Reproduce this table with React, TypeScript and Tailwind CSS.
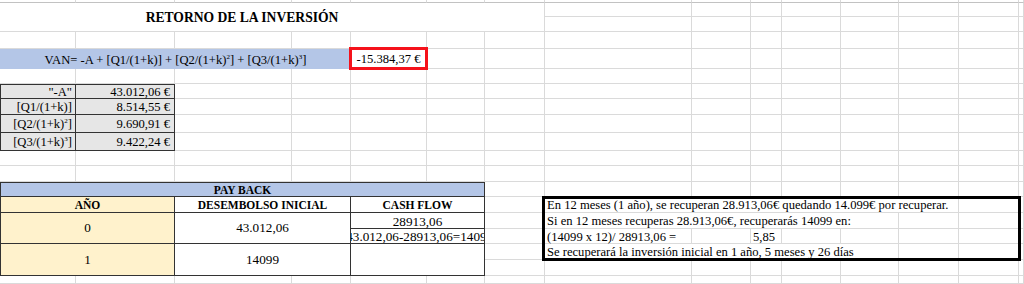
const sheetGrid =
  'grid grid-cols-[76px_99px_117px_59px_76px_58px_60px_147px_59px_31px_59px_58px_60px_60px_1fr] grid-rows-[3px_14px_15px_17px_20px_15px_15px_16px_18px_18px_15px_16px_15px_16px_16px_15px_16px_16px_1fr]';

const factors = [
  { label: <>&quot;-A&quot;</>, value: '43.012,06 €', first: true },
  { label: <>[Q1/(1+k)]</>, value: '8.514,55 €' },
  {
    label: (
      <>
        [Q2/(1+k)<sup className="text-[7px]">2</sup>]
      </>
    ),
    value: '9.690,91 €',
  },
  {
    label: (
      <>
        [Q3/(1+k)<sup className="text-[7px]">3</sup>]
      </>
    ),
    value: '9.422,24 €',
  },
];

const factorRows = [
  'row-start-7 row-end-8',
  'row-start-8 row-end-9',
  'row-start-9 row-end-10',
  'row-start-10 row-end-11',
];

export default function App() {
  return (
    <div className="grid h-[284px] w-[1024px] overflow-hidden bg-white font-['Liberation_Serif',serif] text-[12.6px] leading-none text-black">
      {/* cuadrícula de fondo */}
      <div className={`col-start-1 row-start-1 ${sheetGrid}`}>
        {Array.from({ length: 19 * 15 }, (_, i) => (
          <div
            key={i}
            className={
              i < 15
                ? 'border-r border-b border-r-[#dadada] border-b-[#c2c2c2]'
                : 'border-r border-b border-[#dadada]'
            }
          />
        ))}
      </div>

      {/* contenido */}
      <div className={`col-start-1 row-start-1 ${sheetGrid}`}>
        {/* título */}
        <div className="col-start-1 col-end-8 row-start-2 row-end-4 flex items-center justify-center border-r border-b border-[#dadada] bg-white pr-[60px] pt-[2px] text-[13.6px] font-bold">
          RETORNO DE LA INVERSIÓN
        </div>

        {/* VAN */}
        <div className="col-start-1 col-end-5 row-start-5 row-end-6 flex items-center justify-center bg-[#b4c6e7] pt-[3px]">
          VAN= -A + [Q1/(1+k)] + [Q2/(1+k)<sup className="text-[7px]">2</sup>] + [Q3/(1+k)
          <sup className="text-[7px]">3</sup>]
        </div>
        <div className="z-10 col-start-5 col-end-6 row-start-5 row-end-6 -mt-[2px] -mr-px -mb-px -ml-[2px] flex items-center justify-center border-[3px] border-[#f5121b] bg-white pt-[2px]">
          -15.384,37 €
        </div>

        {/* factores */}
        {factors.map((f, i) => (
          <div key={i} className="contents">
            <div
              className={`col-start-1 col-end-2 ${factorRows[i]} flex items-center justify-end border-r border-b border-l border-[#333] bg-[#e6e6e6] pr-[3px] pt-[2px] ${f.first ? 'border-t' : ''}`}
            >
              {f.label}
            </div>
            <div
              className={`col-start-2 col-end-3 ${factorRows[i]} flex items-center justify-end border-r border-b border-[#333] bg-[#e6e6e6] pr-[4px] pt-[2px] ${f.first ? 'border-t' : ''}`}
            >
              {f.value}
            </div>
          </div>
        ))}

        {/* pay back */}
        <div className="col-start-1 col-end-7 row-start-13 row-end-14 flex items-center justify-center border border-[#333] bg-[#b4c6e7] pt-[2px] text-[11.5px] font-bold">
          PAY BACK
        </div>
        <div className="col-start-1 col-end-3 row-start-14 row-end-15 flex items-center justify-center border-r border-b border-l border-[#333] bg-[#fff2cc] pt-[2px] text-[11.5px] font-bold">
          AÑO
        </div>
        <div className="col-start-3 col-end-5 row-start-14 row-end-15 flex items-center justify-center border-r border-b border-[#333] bg-white pt-[2px] text-[11.5px] font-bold">
          DESEMBOLSO INICIAL
        </div>
        <div className="col-start-5 col-end-7 row-start-14 row-end-15 flex items-center justify-center border-r border-b border-[#333] bg-white pt-[2px] text-[11.5px] font-bold">
          CASH FLOW
        </div>
        <div className="col-start-1 col-end-3 row-start-15 row-end-17 flex items-center justify-center border-r border-b border-l border-[#333] bg-[#fff2cc] text-[13.2px]">
          0
        </div>
        <div className="col-start-3 col-end-5 row-start-15 row-end-17 flex items-center justify-center border-r border-b border-[#333] bg-white text-[13.2px]">
          43.012,06
        </div>
        <div className="col-start-5 col-end-7 row-start-15 row-end-16 flex items-center justify-center border-r border-b border-[#333] bg-white pt-[2px] text-[13.2px]">
          28913,06
        </div>
        <div className="col-start-5 col-end-7 row-start-16 row-end-17 flex items-center justify-center overflow-hidden whitespace-nowrap border-r border-b border-[#333] bg-white pt-[2px] text-[13.2px]">
          -43.012,06-28913,06=14099
        </div>
        <div className="col-start-1 col-end-3 row-start-17 row-end-19 flex items-center justify-center border-r border-b border-l border-[#333] bg-[#fff2cc] text-[13.2px]">
          1
        </div>
        <div className="col-start-3 col-end-5 row-start-17 row-end-19 flex items-center justify-center border-r border-b border-[#333] bg-white text-[13.2px]">
          14099
        </div>
        <div className="col-start-5 col-end-7 row-start-17 row-end-19 border-r border-b border-[#333] bg-white" />

        {/* recuperación */}
        <div className="col-start-8 col-end-14 row-start-14 row-end-15 flex items-center whitespace-nowrap border-r border-b border-[#dadada] bg-white pl-[2px] pt-[2px]">
          En 12 meses (1 año), se recuperan 28.913,06€ quedando 14.099€ por recuperar.
        </div>
        <div className="col-start-8 col-end-13 row-start-15 row-end-16 flex items-center whitespace-nowrap border-r border-b border-[#dadada] bg-white pl-[2px] pt-[2px]">
          Si en 12 meses recuperas 28.913,06€, recuperarás 14099 en:
        </div>
        <div className="col-start-8 col-end-9 row-start-16 row-end-17 flex items-center whitespace-nowrap pl-[2px] pt-[2px]">
          (14099 x 12)/ 28913,06 =
        </div>
        <div className="col-start-10 col-end-11 row-start-16 row-end-17 flex items-center whitespace-nowrap pl-[2px] pt-[2px]">
          5,85
        </div>
        <div className="col-start-8 col-end-13 row-start-17 row-end-18 flex items-center whitespace-nowrap border-r border-b border-[#dadada] bg-white pl-[2px] pt-[2px]">
          Se recuperará la inversión inicial en 1 año, 5 meses y 26 días
        </div>
        <div className="z-10 col-start-8 col-end-15 row-start-14 row-end-18 -mt-px -mr-[2px] -mb-px -ml-[3px] border-[3px] border-black" />
      </div>
    </div>
  );
}
